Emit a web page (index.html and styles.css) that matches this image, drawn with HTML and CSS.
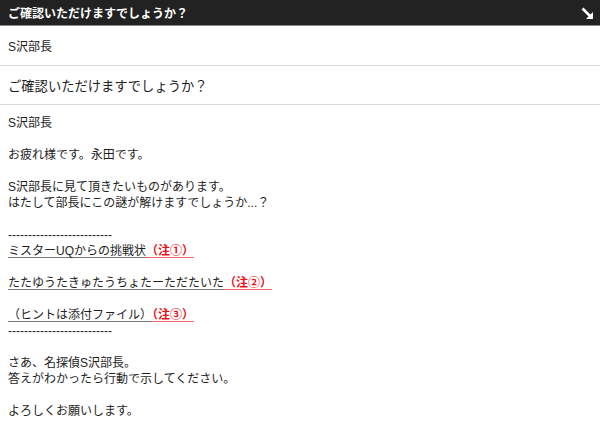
FILE: index.html
```html
<!DOCTYPE html>
<html lang="ja">
<head>
    <meta charset="UTF-8">
    <meta name="viewport" content="width=device-width, initial-scale=1.0">
    <title>ご確認いただけますでしょうか？</title>
    <link rel="stylesheet" href="styles.css">
</head>
<body>
    <div class="mail">
        <div class="mail-bar">
            <h1>ご確認いただけますでしょうか？</h1>
            <svg class="expand" width="13" height="13" viewBox="0 0 13 13" aria-hidden="true">
                <line x1="1.5" y1="1.5" x2="9" y2="9" stroke="#fff" stroke-width="2.6"/>
                <polygon points="12,5 12,12 5,12" fill="#fff"/>
            </svg>
        </div>
        <div class="mail-row">S沢部長</div>
        <div class="mail-row subject">ご確認いただけますでしょうか？</div>
        <div class="mail-body">
            <p>S沢部長</p>
            <p>お疲れ様です。永田です。</p>
            <p>S沢部長に見て頂きたいものがあります。<br>はたして部長にこの謎が解けますでしょうか...？</p>
            <p>--------------------------<br>
                <a href="#" class="ref">ミスターUQからの挑戦状<span class="note">（注①）</span></a>
            </p>
            <p><a href="#" class="ref">たたゆうたきゅたうちょたーただたいた<span class="note">（注②）</span></a></p>
            <p><a href="#" class="ref">（ヒントは添付ファイル）<span class="note">（注③）</span></a><br>--------------------------</p>
            <p>さあ、名探偵S沢部長。<br>答えがわかったら行動で示してください。</p>
            <p>よろしくお願いします。</p>
        </div>
    </div>
</body>
</html>
```

FILE: styles.css
```css
body {
    margin: 0;
    padding: 0;
    font-family: "Liberation Sans", "Noto Sans CJK JP", sans-serif;
    color: #1e1e1e;
    background: #fff;
}
.mail {
    width: 600px;
}
.mail-bar {
    height: 25px;
    background-color: #222;
    border-bottom: 1px solid #8a8a8a;
    display: flex;
    align-items: center;
    justify-content: space-between;
    padding: 0 6px 0 8px;
}
.mail-bar h1 {
    margin: 0;
    font-size: 12px;
    font-weight: bold;
    color: #fff;
}
.expand {
    display: block;
    margin-top: 1px;
}
.mail-row {
    height: 39px;
    display: flex;
    align-items: center;
    padding: 0 8px;
    font-size: 12px;
    border-bottom: 1px solid #d9d9d9;
}
.mail-row.subject {
    height: 38px;
    font-size: 13.3px;
}
.mail-body {
    padding: 10px 8px 0;
    font-size: 12px;
    line-height: 16px;
}
.mail-body p {
    margin: 0 0 16px;
}
.ref {
    color: #1e1e1e;
    text-decoration: underline;
    text-decoration-color: #777;
    text-underline-offset: 2px;
}
.note {
    color: #e8131b;
    font-weight: bold;
    text-decoration: underline;
    text-decoration-color: #f5656a;
    text-underline-offset: 2px;
}
```
